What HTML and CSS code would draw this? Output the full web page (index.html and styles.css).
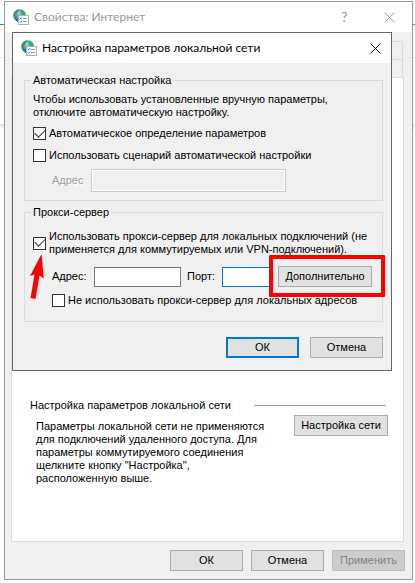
FILE: index.html
```html
<!DOCTYPE html>
<html lang="ru">
<head>
    <meta charset="UTF-8">
    <meta name="viewport" content="width=device-width, initial-scale=1.0">
    <title>Свойства: Интернет</title>
    <link rel="stylesheet" href="styles.css">
</head>
<body>

    <svg class="defs" aria-hidden="true">
        <defs>
            <radialGradient id="globe" cx="40%" cy="30%" r="75%">
                <stop offset="0" stop-color="#a5dcfa"/>
                <stop offset="0.5" stop-color="#3f8fdc"/>
                <stop offset="1" stop-color="#1a48a0"/>
            </radialGradient>
            <symbol id="net-icon" viewBox="0 0 16 16">
                <circle cx="6.5" cy="6.5" r="6.3" fill="url(#globe)"/>
                <path d="M1 3.600C2.200 1.600 4 .6 6 .4L6.600 1.400 5 2.400 4.400 4 3.600 5.200 3.400 7.400 2 8.400.4 7Z" fill="#3f9a45"/>
                <path d="M8 .6c2.400.6 4.200 2.200 4.800 5L11 6 9.400 5 8 3.600Z" fill="#45a83c"/>
                <path d="M3 11l1.600-1.400 1 1.200v1.900C4.600 12.500 3.700 12 3 11Z" fill="#2c7c3a"/>
                <rect x="5.500" y="6.500" width="10" height="9" fill="#f8fafc" stroke="#aab2b9"/>
                <path d="M7 9l.7.8L9 8.300M7 12.500l.7.8L9 11.800" fill="none" stroke="#2b7fd0"/>
                <path d="M10 9.500h4M10 12.500h4" stroke="#959da5"/>
            </symbol>
        </defs>
    </svg>

    <div class="window">
        <div class="title-bar">
            <svg class="app-icon" aria-hidden="true"><use href="#net-icon"/></svg>
            <h1>Свойства: Интернет</h1>
            <button class="title-button help" aria-label="Справка">?</button>
            <button class="title-button" aria-label="Закрыть">
                <svg viewBox="0 0 11 11"><path d="M.5.5l10 10M10.500.5l-10 10"/></svg>
            </button>
        </div>

        <div class="content">
            <div class="tabs">
                <div class="tab-row"></div>
                <div class="tab-row"></div>
            </div>
            <div class="panel">
                <div class="section-title">
                    <h2>Настройка параметров локальной сети</h2>
                    <div class="line"></div>
                </div>
                <div class="section">
                    <p>Параметры локальной сети не применяются<br>для подключений удаленного доступа. Для<br>параметры коммутируемого соединения<br>щелкните кнопку "Настройка",<br>расположенную выше.</p>
                    <button class="button wide">Настройка сети</button>
                </div>
            </div>
            <div class="buttons">
                <button class="button">ОК</button>
                <button class="button">Отмена</button>
                <button class="button" disabled>Применить</button>
            </div>
        </div>

        <div class="dialog" role="dialog" aria-labelledby="dialog-title">
            <div class="title-bar">
                <svg class="app-icon" aria-hidden="true"><use href="#net-icon"/></svg>
                <h1 id="dialog-title">Настройка параметров локальной сети</h1>
                <button class="title-button" aria-label="Закрыть">
                    <svg viewBox="0 0 11 11"><path d="M.5.5l10 10M10.500.5l-10 10"/></svg>
                </button>
            </div>

            <div class="dialog-content">
                <fieldset class="group">
                    <legend>Автоматическая настройка</legend>
                    <p>Чтобы использовать установленные вручную параметры,<br>отключите автоматическую настройку.</p>
                    <div class="check">
                        <input type="checkbox" id="auto" checked>
                        <label for="auto">Автоматическое определение параметров</label>
                    </div>
                    <div class="check">
                        <input type="checkbox" id="script">
                        <label for="script">Использовать сценарий автоматической настройки</label>
                    </div>
                    <div class="field off">
                        <label for="script-address">Адрес</label>
                        <input type="text" id="script-address" disabled>
                    </div>
                </fieldset>

                <fieldset class="group proxy">
                    <legend>Прокси-сервер</legend>
                    <div class="check">
                        <input type="checkbox" id="proxy" checked>
                        <label for="proxy">Использовать прокси-сервер для локальных подключений (не<br>применяется для коммутируемых или VPN-подключений).</label>
                    </div>
                    <div class="field">
                        <label for="address">Адрес:</label>
                        <input type="text" id="address">
                        <label for="port">Порт:</label>
                        <input type="text" id="port" class="focused">
                        <div class="marked">
                            <button class="button wide">Дополнительно</button>
                        </div>
                    </div>
                    <div class="check inner">
                        <input type="checkbox" id="bypass">
                        <label for="bypass">Не использовать прокси-сервер для локальных адресов</label>
                    </div>
                    <svg class="arrow" viewBox="0 0 14 46" aria-hidden="true">
                        <path d="M11.500 0L13.800 24.500 9.500 21.500 5.500 45 .5 44 4.500 20.500 0 22Z"/>
                    </svg>
                </fieldset>

                <div class="buttons">
                    <button class="button default">ОК</button>
                    <button class="button">Отмена</button>
                </div>
            </div>
        </div>
    </div>

</body>
</html>
```

FILE: styles.css
```css
* {
    box-sizing: border-box;
}

body {
    margin: 0;
    padding: 1px 2px 3px 4px;
    font-family: "Liberation Sans", Tahoma, sans-serif;
    font-size: 11px;
    line-height: 13px;
    color: #000;
    background:
        linear-gradient(#1fa463, #1fa463) 0 24px / 100% 1px no-repeat,
        linear-gradient(#e6e6e6, #e6e6e6) 0 57px / 100% 1px no-repeat,
        linear-gradient(#dcdcdc, #fff) 0 124px / 100% 6px no-repeat,
        #fff;
}

h1, h2, p {
    margin: 0;
    font-size: inherit;
    font-weight: normal;
}

button, input {
    font: inherit;
    color: inherit;
}

.defs {
    position: absolute;
    width: 0;
    height: 0;
}

.window {
    position: relative;
    border: 1px solid #999;
    background: #f0f0f0;
}

.title-bar {
    display: flex;
    align-items: center;
    height: 30px;
    padding-left: 8px;
    background: #fff;
    font-family: Lato, "Segoe UI", sans-serif;
    font-size: 12px;
    line-height: 16px;
}

.title-bar h1 {
    flex: 1;
    margin-left: 5px;
    white-space: nowrap;
}

.window > .title-bar {
    padding-right: 7px;
    color: #999;
}

.app-icon {
    width: 16px;
    height: 16px;
}

.title-button {
    display: flex;
    align-items: center;
    justify-content: center;
    width: 31px;
    height: 30px;
    padding: 0;
    border: none;
    background: none;
}

.title-button svg {
    width: 11px;
    height: 11px;
    fill: none;
    stroke: currentColor;
}

.title-button.help {
    width: 45px;
    font-size: 14px;
    margin-right: 7px;
}

.content {
    padding: 9px 8px 8px 6px;
}

.tabs {
    margin-right: 1px;
    border-top: 1px solid #dcdcdc;
    border-right: 1px solid #dcdcdc;
}

.tab-row {
    height: 18px;
    border-bottom: 1px solid #dcdcdc;
}

.tab-row:last-child {
    height: 17px;
    border-bottom: none;
}

.panel {
    min-height: 465px;
    padding: 321px 15px 0 18px;
    border: 1px solid #dcdcdc;
    background: #fff;
}

.section-title {
    display: flex;
    align-items: center;
    justify-content: space-between;
    padding-right: 2px;
}

.line {
    width: 132px;
    border-top: 1px solid #a0a0a0;
}

.section {
    display: flex;
    justify-content: space-between;
    align-items: flex-start;
    padding: 3px 0 0 6px;
}

.section p {
    margin-top: 5px;
}

.buttons {
    display: flex;
    justify-content: flex-end;
    gap: 8px;
    margin-top: 8px;
}

.content > .buttons {
    margin-right: -1px;
}

.button {
    width: 73px;
    height: 21px;
    padding: 0;
    border: 1px solid #adadad;
    background: #e1e1e1;
    text-align: center;
    white-space: nowrap;
}

.button.wide {
    width: 94px;
}

.button.default {
    border: 2px solid #0078d7;
}

.button:disabled {
    border-color: #bfbfbf;
    background: #ccc;
    color: #838383;
}

.dialog {
    position: absolute;
    top: 30px;
    left: 7px;
    right: 20px;
    border: 1px solid #666;
    background: #f0f0f0;
}

.dialog-content {
    padding: 11px 8px 12px 11px;
}

.group {
    position: relative;
    min-width: 0;
    margin: 0;
    padding: 6px 8px 8px;
    border: 1px solid #dcdcdc;
}

.group.proxy {
    margin-top: 5px;
    padding: 11px 8px 14px;
}

legend {
    margin-left: -2px;
    padding: 0 2px;
}

.check {
    display: flex;
    align-items: center;
    gap: 3px;
    margin-top: 9px;
}

.group p + .check {
    margin-top: 8px;
}

.check label {
    white-space: nowrap;
}

.check input {
    appearance: none;
    flex: none;
    width: 13px;
    height: 13px;
    margin: 0;
    border: 1px solid #333;
    background: #fff;
}

.check input:checked {
    display: grid;
    place-items: center;
}

.check input:checked::before {
    content: "";
    width: 9px;
    height: 5px;
    border: solid #333;
    border-width: 0 0 1px 1px;
    transform: translateY(-2px) rotate(-45deg);
}

.field {
    display: flex;
    align-items: center;
    margin: 7px 0 0 19px;
}

.field input {
    height: 20px;
    border: 1px solid #7a7a7a;
    background: #fff;
    border-radius: 0;
    padding: 0 3px;
}

.field.off {
    color: #a0a0a0;
}

.field.off label {
    width: 39px;
    text-shadow: 1px 1px #fff;
}

.field.off input {
    width: 195px;
    height: 23px;
    border-color: #ccc;
    background: #f0f0f0;
    box-shadow: inset 0 0 0 1px #fff;
}

.proxy .check:first-of-type {
    margin-top: 0;
}

.proxy .field {
    margin-top: 10px;
}

.proxy .field label {
    width: 42px;
}

#address {
    width: 87px;
    margin-right: 6px;
}

.proxy .field label[for="port"] {
    width: 35px;
}

#port {
    width: 50px;
    margin-right: 6px;
}

#port.focused {
    border-color: #0078d7;
}

.marked {
    position: relative;
}

.marked::after {
    content: "";
    position: absolute;
    inset: -11px -13px -10px -9px;
    border: 4px solid #f00;
    border-radius: 1px;
    pointer-events: none;
}

.check.inner {
    margin: 7px 0 0 19px;
}

.arrow {
    position: absolute;
    left: 5px;
    top: 35px;
    width: 14px;
    height: 46px;
    fill: #f00;
}

.dialog .buttons {
    gap: 11px;
    margin-top: 15px;
}
```
